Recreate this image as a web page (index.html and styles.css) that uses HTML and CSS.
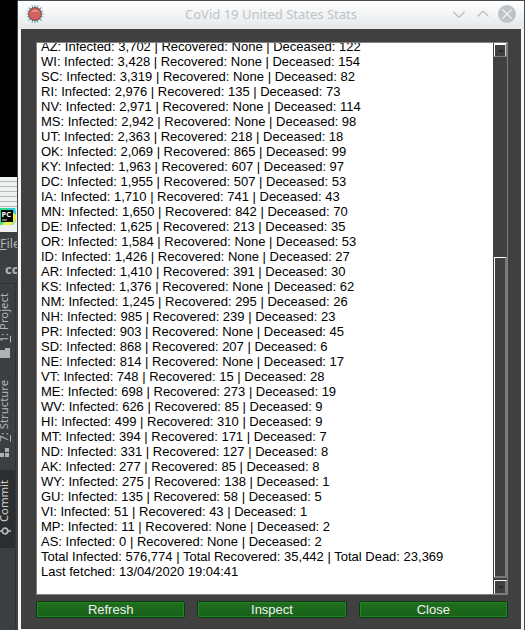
FILE: index.html
```html
<!DOCTYPE html>
<html lang="en">
<head>
<meta charset="utf-8">
<title>CoVid 19 United States Stats</title>
<link rel="stylesheet" href="styles.css">
</head>
<body>
<div class="desktop">
  <aside class="ide">
    <div class="ide-black"></div>
    <div class="ide-title">
      <svg class="pc" width="16" height="20" viewBox="0 0 16 20"><defs><linearGradient id="pg" x1="0" y1="0" x2="1" y2="1"><stop offset="0" stop-color="#21d789"/><stop offset=".5" stop-color="#3be08f"/><stop offset=".62" stop-color="#f4f04a"/><stop offset=".8" stop-color="#e8f04a"/><stop offset="1" stop-color="#13c6ed"/></linearGradient></defs><path d="M0 1H15L16 6V14L13 18H0Z" fill="url(#pg)"/><path d="M8 1H15L16 6V8Z" fill="#20cfe0"/><rect x="1" y="3" width="12" height="12" fill="#050505"/><rect x="2" y="12.500" width="5" height="1" fill="#ddd"/><text x="1.500" y="10" class="pc-label">PC</text></svg>
    </div>
    <div class="ide-menu"><u>F</u>ile</div>
    <div class="ide-crumb">cc</div>
    <div class="ide-tools">
      <div class="tool project"><span><u>1</u>: Project</span><svg width="10" height="10"><path d="M0 2H5V0H10V10H0Z" fill="#afb1b3"/></svg></div>
      <div class="tool structure"><span><u>7</u>: Structure</span><svg width="10" height="10"><path d="M0 6H4V10H0ZM5 6H9V10H5ZM5 1H9V5H5Z" fill="#afb1b3"/></svg></div>
      <div class="tool commit"><span>Commit</span><svg width="12" height="10"><circle cx="5" cy="5" r="2.800" fill="none" stroke="#b5b7b9" stroke-width="1.800"/><path d="M0 5H2M8 5H11" stroke="#b5b7b9" stroke-width="1.500"/></svg></div>
    </div>
  </aside>
  <main class="window">
    <header class="titlebar">
      <svg class="virus" width="18" height="20" viewBox="0 0 18 20"><path d="M9 1V19M.5 10H17.500M2.500 3.500 15.500 16.500M15.500 3.500 2.500 16.500M6 1.500 12 18.500M12 1.500 6 18.500M1 7 17 13M17 7 1 13" stroke="#5fb4b6" stroke-width="1.200"/><circle cx="9" cy="10" r="6.900" fill="#8d4c50"/><circle cx="9" cy="10" r="5.800" fill="#d4605f"/><path d="M4.500 8.500Q9 3 13.500 8.500Q9 6.500 4.500 8.500Z" fill="#eda28e"/></svg>
      <h1>CoVid 19 United States Stats</h1>
      <svg class="controls" width="64" height="20" viewBox="0 0 64 20"><path d="M1.500 8 7 13.500 12.500 8M25.500 12.500 31 7 36.500 12.500" fill="none" stroke="#b8bdc1" stroke-width="1.200"/><circle cx="55" cy="10" r="9" fill="#bdc3c7"/><path d="M50.500 5.500 59.500 14.500M59.500 5.500 50.500 14.500" stroke="#f5f6f6" stroke-width="1.200"/></svg>
    </header>
    <section class="content">
      <div class="listbox">
<pre class="stats">AZ: Infected: 3,702 | Recovered: None | Deceased: 122
WI: Infected: 3,428 | Recovered: None | Deceased: 154
SC: Infected: 3,319 | Recovered: None | Deceased: 82
RI: Infected: 2,976 | Recovered: 135 | Deceased: 73
NV: Infected: 2,971 | Recovered: None | Deceased: 114
MS: Infected: 2,942 | Recovered: None | Deceased: 98
UT: Infected: 2,363 | Recovered: 218 | Deceased: 18
OK: Infected: 2,069 | Recovered: 865 | Deceased: 99
KY: Infected: 1,963 | Recovered: 607 | Deceased: 97
DC: Infected: 1,955 | Recovered: 507 | Deceased: 53
IA: Infected: 1,710 | Recovered: 741 | Deceased: 43
MN: Infected: 1,650 | Recovered: 842 | Deceased: 70
DE: Infected: 1,625 | Recovered: 213 | Deceased: 35
OR: Infected: 1,584 | Recovered: None | Deceased: 53
ID: Infected: 1,426 | Recovered: None | Deceased: 27
AR: Infected: 1,410 | Recovered: 391 | Deceased: 30
KS: Infected: 1,376 | Recovered: None | Deceased: 62
NM: Infected: 1,245 | Recovered: 295 | Deceased: 26
NH: Infected: 985 | Recovered: 239 | Deceased: 23
PR: Infected: 903 | Recovered: None | Deceased: 45
SD: Infected: 868 | Recovered: 207 | Deceased: 6
NE: Infected: 814 | Recovered: None | Deceased: 17
VT: Infected: 748 | Recovered: 15 | Deceased: 28
ME: Infected: 698 | Recovered: 273 | Deceased: 19
WV: Infected: 626 | Recovered: 85 | Deceased: 9
HI: Infected: 499 | Recovered: 310 | Deceased: 9
MT: Infected: 394 | Recovered: 171 | Deceased: 7
ND: Infected: 331 | Recovered: 127 | Deceased: 8
AK: Infected: 277 | Recovered: 85 | Deceased: 8
WY: Infected: 275 | Recovered: 138 | Deceased: 1
GU: Infected: 135 | Recovered: 58 | Deceased: 5
VI: Infected: 51 | Recovered: 43 | Deceased: 1
MP: Infected: 11 | Recovered: None | Deceased: 2
AS: Infected: 0 | Recovered: None | Deceased: 2
Total Infected: 576,774 | Total Recovered: 35,442 | Total Dead: 23,369
Last fetched: 13/04/2020 19:04:41</pre>
        <div class="scrollbar">
          <div class="arrow up"><svg width="6" height="3"><path d="M0 3 3 0 6 3Z" fill="#2b2b2b"/></svg></div>
          <div class="track"><div class="thumb"></div></div>
          <div class="arrow down"><svg width="6" height="3"><path d="M0 0H6L3 3Z" fill="#2b2b2b"/></svg></div>
        </div>
      </div>
      <div class="buttons">
        <button>Refresh</button>
        <button>Inspect</button>
        <button>Close</button>
      </div>
    </section>
  </main>
</div>
</body>
</html>
```
FILE: styles.css
```css
* { box-sizing: border-box; }
body { margin: 0; overflow: hidden; background: #3c3f41; }
svg { display: block; flex: none; }
.desktop { display: flex; width: 525px; height: 630px; }

.ide {
  width: 18px; height: 630px; flex: none; overflow: hidden;
  display: flex; flex-direction: column;
  background: #3c3f41; border-right: 1px solid #42484e;
  font-family: "Noto Sans", sans-serif; color: #b4b6b8;
}
.ide-black { height: 177px; flex: none; background: #000; }
.ide-title {
  height: 55px; flex: none; padding-top: 30px;
  background: repeating-linear-gradient(#f0f1f1 0 4px, #b5b9bb 4px 5px);
  background-size: 100% 30px; background-repeat: no-repeat; background-color: #eff0f1;
}
.pc-label { font: bold 7.5px "Open Sans", sans-serif; fill: #fff; }
.ide-menu { height: 23px; flex: none; font-size: 12.5px; line-height: 23px; white-space: nowrap; }
.ide-crumb {
  height: 29px; flex: none; padding-left: 5px; overflow: hidden;
  font-size: 13px; font-weight: bold; line-height: 29px;
  border-bottom: 1px solid #2f3233;
}
.ide-tools { flex: 1; width: 16px; border-right: 1px solid #303335; }
.tool {
  display: flex; flex-direction: column; align-items: flex-start; justify-content: flex-end;
  font-size: 11.3px; line-height: 14px;
}
.tool span { writing-mode: vertical-rl; transform: rotate(180deg); white-space: nowrap; margin-left: -3px; }
.project { height: 74px; gap: 6px; }
.structure { height: 101px; gap: 5px; padding-bottom: 2px; margin-bottom: 11px; }
.commit { height: 78px; gap: 4px; padding-bottom: 12px; background: #2b2d2e; color: #d0d2d4; }

.window {
  width: 507px; flex: none; display: flex; flex-direction: column;
  background: #f5f6f6; border-top: 1px solid #454b55; border-right: 1px solid #454b55;
}
.titlebar {
  height: 28px; flex: none; padding: 0 8px 2px 8px;
  display: flex; align-items: center; justify-content: space-between;
  background: linear-gradient(#fff, #e5e7e9);
}
.titlebar h1 {
  margin: 0 0 0 46px; font: 13px "Noto Sans", sans-serif; color: #bdc3c7;
}
.content {
  height: 600px; margin: 0 3px; padding: 13px 13px 0 15px; background: #404040;
}
.listbox {
  width: 472px; height: 553px; display: flex; overflow: hidden;
  background: #fff; border: 1px solid #808080;
}
.stats {
  flex: 1; margin: -4px 0 0; padding-left: 4px;
  font: 13px/15px "Liberation Sans", Arial, sans-serif; color: #000;
}
.scrollbar { width: 14px; flex: none; display: flex; flex-direction: column; background: #404040; }
.arrow {
  width: 13px; height: 14px; flex: none; margin-left: 1px;
  display: flex; align-items: center; justify-content: center;
  border: solid #787878; border-width: 1px; border-top-color: #fff; border-left-color: #fff;
}
.up { box-shadow: inset -1px 0 #d0d0d0, inset 0 1px #fff; }
.down { box-shadow: inset -1px 0 #787878; }
.track { flex: 1; padding-top: 200px; }
.thumb {
  height: 321px; margin-left: 1px;
  border: solid #787878; border-width: 1px 2px 2px 1px; border-top-color: #fff; border-left-color: #fff;
}
.buttons { display: flex; gap: 12px; margin-top: 6px; width: 472px; }
.buttons button {
  flex: 1; height: 17px; padding: 0;
  border: 1px solid #0a3a0d; border-radius: 2px;
  background: linear-gradient(#1f701f, #196019); box-shadow: inset 0 0 0 1px #268226;
  font: 13px/15px "Liberation Sans", Arial, sans-serif; color: #f2f2f2;
}
```
